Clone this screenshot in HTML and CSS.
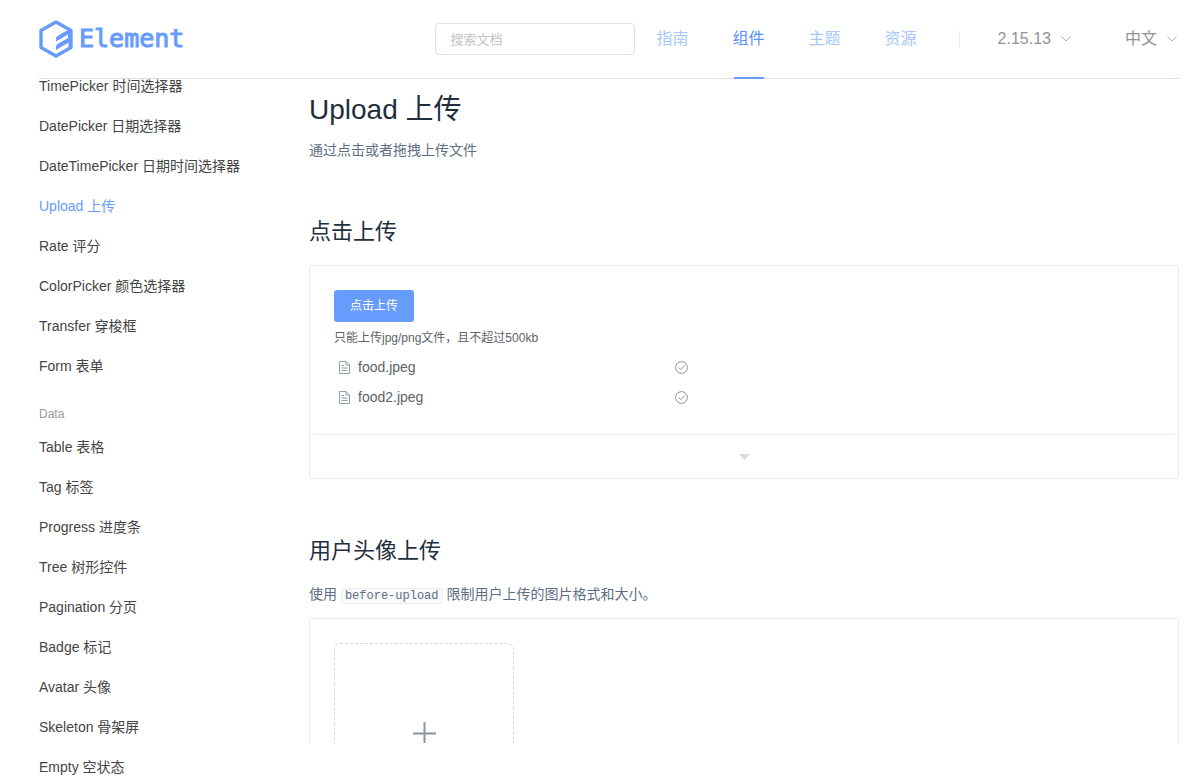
FILE: index.html
```html
<!DOCTYPE html>
<html lang="zh-CN">
<head>
<meta charset="utf-8">
<title>Upload 上传 - Element</title>
<link rel="stylesheet" href="styles.css">
</head>
<body>
<header class="header">
  <a class="logo" href="#">
    <svg class="logo-mark" viewBox="0 0 34 38" width="34" height="38" aria-hidden="true">
      <path d="M17 2 32 10.500V27.500L17 36 2 27.500V10.500Z" fill="none" stroke="currentColor" stroke-width="3.400" stroke-linejoin="round"/>
      <path d="M17 21.500V18.500Q17 17 18.500 16L27 11 32 9V28L29.500 27V22.500L17 30V26.500Q17 25 18.500 24L29 18V14.500Z" fill="currentColor"/>
    </svg>
    <span class="logo-text">Element</span>
  </a>
  <input class="search" type="text" placeholder="搜索文档" aria-label="搜索文档">
  <nav class="nav">
    <a href="#">指南</a>
    <a href="#" class="active">组件</a>
    <a href="#">主题</a>
    <a href="#">资源</a>
  </nav>
  <span class="separator"></span>
  <div class="menus">
    <button class="menu" type="button">2.15.13
      <svg viewBox="0 0 10 6" width="10" height="6" aria-hidden="true"><path d="M.5.500 5 5 9.500.500" fill="none" stroke="currentColor"/></svg>
    </button>
    <button class="menu" type="button">中文
      <svg viewBox="0 0 10 6" width="10" height="6" aria-hidden="true"><path d="M.5.500 5 5 9.500.500" fill="none" stroke="currentColor"/></svg>
    </button>
  </div>
</header>
<div class="layout">
  <aside class="sidebar">
    <ul class="side-list">
      <li><a href="#">TimePicker 时间选择器</a></li>
      <li><a href="#">DatePicker 日期选择器</a></li>
      <li><a href="#">DateTimePicker 日期时间选择器</a></li>
      <li><a href="#" class="active">Upload 上传</a></li>
      <li><a href="#">Rate 评分</a></li>
      <li><a href="#">ColorPicker 颜色选择器</a></li>
      <li><a href="#">Transfer 穿梭框</a></li>
      <li><a href="#">Form 表单</a></li>
    </ul>
    <div class="group-title">Data</div>
    <ul class="side-list">
      <li><a href="#">Table 表格</a></li>
      <li><a href="#">Tag 标签</a></li>
      <li><a href="#">Progress 进度条</a></li>
      <li><a href="#">Tree 树形控件</a></li>
      <li><a href="#">Pagination 分页</a></li>
      <li><a href="#">Badge 标记</a></li>
      <li><a href="#">Avatar 头像</a></li>
      <li><a href="#">Skeleton 骨架屏</a></li>
      <li><a href="#">Empty 空状态</a></li>
    </ul>
  </aside>
  <main class="content">
    <h1>Upload 上传</h1>
    <p>通过点击或者拖拽上传文件</p>
    <h2>点击上传</h2>
    <section class="demo">
      <div class="source">
        <button class="primary" type="button">点击上传</button>
        <div class="tip">只能上传jpg/png文件，且不超过500kb</div>
        <ul class="files">
          <li>
            <svg class="doc" viewBox="0 0 11 13" width="11" height="13" aria-hidden="true"><path d="M.5.500H7L10.500 4V12.500H.5ZM7 .5V4H10.500M2.500 4.500H5M2.500 7H8.500M2.500 9.500H8.500" fill="none" stroke="currentColor"/></svg>
            <a href="#">food.jpeg</a>
            <svg class="check" viewBox="0 0 13 13" width="13" height="13" aria-hidden="true"><circle cx="6.500" cy="6.500" r="5.900" fill="none" stroke="currentColor"/><path d="M3.600 6.600 5.900 8.600 9.800 4.500" fill="none" stroke="currentColor"/></svg>
          </li>
          <li>
            <svg class="doc" viewBox="0 0 11 13" width="11" height="13" aria-hidden="true"><path d="M.5.500H7L10.500 4V12.500H.5ZM7 .5V4H10.500M2.500 4.500H5M2.500 7H8.500M2.500 9.500H8.500" fill="none" stroke="currentColor"/></svg>
            <a href="#">food2.jpeg</a>
            <svg class="check" viewBox="0 0 13 13" width="13" height="13" aria-hidden="true"><circle cx="6.500" cy="6.500" r="5.900" fill="none" stroke="currentColor"/><path d="M3.600 6.600 5.900 8.600 9.800 4.500" fill="none" stroke="currentColor"/></svg>
          </li>
        </ul>
      </div>
      <button class="expand" type="button" aria-label="显示代码">
        <svg viewBox="0 0 11 6" width="11" height="6" aria-hidden="true"><path d="M0 0H11L5.500 6Z" fill="currentColor"/></svg>
      </button>
    </section>
    <h2>用户头像上传</h2>
    <p>使用 <code>before-upload</code> 限制用户上传的图片格式和大小。</p>
    <section class="demo">
      <div class="source">
        <button class="avatar" type="button" aria-label="上传头像">
          <svg viewBox="0 0 23 23" width="23" height="23" aria-hidden="true"><path d="M0 11.500H23M11.500 0V23" fill="none" stroke="currentColor" stroke-width="2"/></svg>
        </button>
      </div>
    </section>
  </main>
</div>
</body>
</html>
```
FILE: styles.css
```css
* { box-sizing: border-box; }

body {
  margin: 0;
  height: 100vh;
  display: flex;
  flex-direction: column;
  overflow: hidden;
  background: #fff;
  color: #606266;
  font: 14px/20px "Liberation Sans", "Noto Sans CJK SC", sans-serif;
}

a { color: inherit; text-decoration: none; }
ul { list-style: none; margin: 0; padding: 0; }
button { font: inherit; cursor: pointer; }

.header {
  flex: none;
  display: flex;
  align-items: center;
  height: 79px;
  margin: 0 6px 0 39px;
  border-bottom: 1px solid #dcdfe6;
}

.logo {
  display: flex;
  align-items: center;
  gap: 6px;
  margin-right: auto;
  color: #689cfc;
}

.logo-text {
  font: 25px/30px "DejaVu Sans Mono", monospace;
  -webkit-text-stroke: 1px currentColor;
}

.search {
  width: 200px;
  height: 32px;
  padding: 0 15px;
  border: 1px solid #dcdfe6;
  border-radius: 4px;
  font: inherit;
  font-size: 13px;
  outline: none;
}
.search::placeholder { color: #c0c4cc; }

.nav { display: flex; font-size: 16px; align-self: stretch; }
.nav a {
  position: relative;
  padding: 0 22px;
  line-height: 78px;
  color: #a9c7fd;
}
.nav a.active { color: #5a93f8; }
.nav a.active::after {
  content: "";
  position: absolute;
  left: 23px;
  right: 23px;
  bottom: -1px;
  height: 2px;
  background: #689cfc;
}

.separator { width: 1px; height: 16px; margin: 0 38px 0 20px; background: #ebebeb; }

.menus { display: flex; gap: 52px; }
.menu {
  display: flex;
  align-items: center;
  gap: 10px;
  padding: 0 2px 0 0;
  border: 0;
  background: none;
  color: #909399;
  font-size: 16px;
}
.menu svg { color: #a8b4c0; }

.layout { flex: 1; min-height: 0; display: flex; }

/* The list is scrolled: its first entry starts just under the header. */
.sidebar { flex: none; width: 270px; padding-left: 39px; overflow: hidden; }
.side-list:first-child { margin-top: -13px; }
.side-list a { display: block; line-height: 40px; color: #444; }
.side-list a.active { color: #689cfc; }
.group-title { margin-top: 15px; font-size: 12px; line-height: 26px; color: #999; }

.content { flex: 1; min-width: 0; margin: 0 6px 40px 39px; padding-top: 12px; overflow: hidden; }

h1, h2 { margin: 0; font-weight: 400; color: #1f2f3d; }
h1 { margin-bottom: 11px; font-size: 28px; line-height: 38px; }
h2 { margin: 56px 0 18px; font-size: 22px; line-height: 31px; }
p { margin: 0 0 14px; color: #5e6d82; }

code {
  padding: 0 3px;
  border: 1px solid #eaeefb;
  border-radius: 4px;
  background: #f9fafc;
  font: 12px/14px "Liberation Mono", monospace;
}

.demo { border: 1px solid #ebebeb; border-radius: 3px; }
.source { padding: 24px 24px 25px; }

.primary {
  display: block;
  height: 32px;
  padding: 0 16px;
  border: 0;
  border-radius: 3px;
  background: #689cfc;
  color: #fff;
  font-size: 12px;
}
.tip { margin-top: 7px; font-size: 12px; line-height: 18px; }

.files { display: grid; gap: 6px; max-width: 360px; margin-top: 8px; }
.files li { display: flex; align-items: center; height: 24px; padding: 0 6px 0 5px; }
.files a { flex: 1; margin-left: 8px; }
.doc { color: #909fa8; }
.check { color: #929292; }

.expand {
  display: flex;
  align-items: center;
  justify-content: center;
  width: 100%;
  height: 44px;
  border: 0;
  border-top: 1px solid #eaeefb;
  background: none;
  color: #d8dae4;
}

.avatar {
  display: flex;
  align-items: center;
  justify-content: center;
  width: 180px;
  height: 180px;
  border: 1px dashed #d9d9d9;
  border-radius: 6px;
  background: none;
  color: #8c939d;
}
```
